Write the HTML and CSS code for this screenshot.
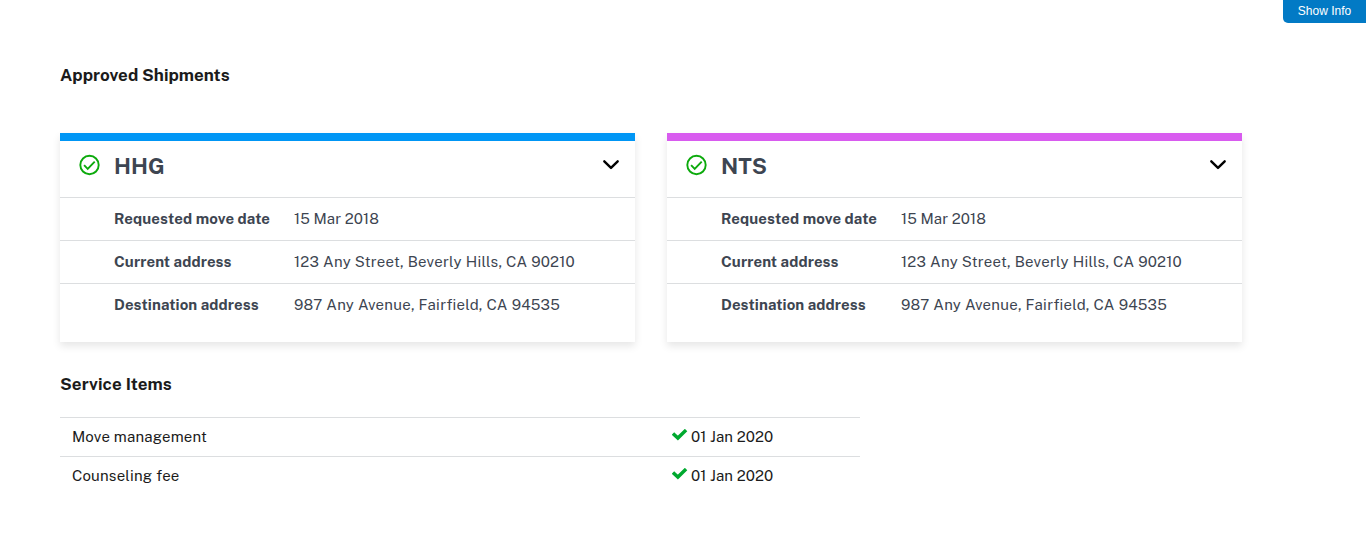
FILE: index.html
```html
<!DOCTYPE html>
<html lang="en">
<head>
<meta charset="utf-8">
<title>Approved Shipments</title>
<link rel="stylesheet" href="styles.css">
</head>
<body>
<svg width="0" height="0" class="sprite" aria-hidden="true">
  <symbol id="circle-check" viewBox="0 0 22 22"><circle cx="10.5" cy="11" r="9.2" fill="none" stroke="#0caa0c" stroke-width="1.9"/><path d="M5.1 11.2 8.7 14.9 15.7 7.6" fill="none" stroke="#0caa0c" stroke-width="1.9"/></symbol>
  <symbol id="chevron" viewBox="0 0 18 12"><path d="M2.3 2.3 9 8.9 15.7 2.3" fill="none" stroke="#000" stroke-width="2.4" stroke-linecap="round" stroke-linejoin="round"/></symbol>
  <symbol id="check" viewBox="0 0 16 12"><path d="M2.3 5.7 5.9 9 12.8 2.3" fill="none" stroke="#00a92f" stroke-width="3.5" stroke-linejoin="miter" stroke-linecap="square" /></symbol>
</svg>
<button class="show-info">Show Info</button>
<main class="page">
  <h4 class="heading approved">Approved Shipments</h4>
  <div class="shipments">
    <section class="card hhg">
      <header class="card-head"><svg class="status"><use href="#circle-check"/></svg><h3 class="title">HHG</h3><svg class="chevron"><use href="#chevron"/></svg></header>
      <dl class="details">
        <div class="row"><dt class="move-date">Requested move date</dt><dd class="date">15 Mar 2018</dd></div>
        <div class="row"><dt>Current address</dt><dd class="address">123 Any Street, Beverly Hills, CA 90210</dd></div>
        <div class="row"><dt>Destination address</dt><dd class="address">987 Any Avenue, Fairfield, CA 94535</dd></div>
      </dl>
    </section>
    <section class="card nts">
      <header class="card-head"><svg class="status"><use href="#circle-check"/></svg><h3 class="title">NTS</h3><svg class="chevron"><use href="#chevron"/></svg></header>
      <dl class="details">
        <div class="row"><dt class="move-date">Requested move date</dt><dd class="date">15 Mar 2018</dd></div>
        <div class="row"><dt>Current address</dt><dd class="address">123 Any Street, Beverly Hills, CA 90210</dd></div>
        <div class="row"><dt>Destination address</dt><dd class="address">987 Any Avenue, Fairfield, CA 94535</dd></div>
      </dl>
    </section>
  </div>
  <h4 class="heading services">Service Items</h4>
  <div class="items">
    <div class="item"><span class="name">Move management</span><svg class="check"><use href="#check"/></svg><span class="date">01 Jan 2020</span></div>
    <div class="item"><span class="name">Counseling fee</span><svg class="check"><use href="#check"/></svg><span class="date">01 Jan 2020</span></div>
  </div>
</main>
</body>
</html>
```
FILE: styles.css
```css
* { box-sizing: border-box; }
body { margin: 0; background: #fff; color: #1b1b1b; font: 15px/19px "Public Sans", Inter, sans-serif; }
h3, h4, dl, dd { margin: 0; }
.sprite { position: absolute; }
.show-info {
  position: absolute; top: 0; right: 0; width: 83px; height: 23px; padding: 0 0 1px;
  border: 0; border-radius: 0 0 0 5px; background: #027ac5; color: #fff;
  font: 12px/20px "Liberation Sans", Arial, sans-serif;
}
.page { padding: 64px 60px 0; }
.heading { font-size: 17px; line-height: 22px; font-weight: 700; }
.shipments { display: grid; grid-template-columns: 575px 575px; gap: 32px; margin-top: 47px; }
.card { height: 209px; border-top: 8px solid #0096f5; background: #fff; color: #3d4551; box-shadow: 0 4px 8px rgba(0, 0, 0, .1); }
.nts { border-top-color: #d85bef; }
.card-head { display: flex; height: 56px; padding: 13px 15px 0 19px; align-items: flex-start; }
.status { width: 22px; height: 22px; }
.title { width: 488px; margin-left: 13px; font-size: 22px; line-height: 24px; }
.chevron { width: 18px; height: 12px; margin-top: 5px; margin-right: -1px; }
.row { display: flex; height: 43px; padding: 11px 0 0 54px; border-top: 1px solid #dcdee0; }
dt { width: 180px; font-weight: 700; letter-spacing: .08px; }
.move-date { letter-spacing: .12px; }
.address { letter-spacing: .24px; }
.services { margin-top: 31px; letter-spacing: .09px; }
.items { width: 800px; margin-top: 22px; }
.item { display: flex; height: 39px; padding: 9px 12px 0; border-top: 1px solid #dcdee0; }
.name { width: 600px; letter-spacing: .18px; }
.check { width: 16px; height: 12px; margin-top: 2px; }
.date { letter-spacing: .06px; }
.item .date { margin-left: 3px; }
```
